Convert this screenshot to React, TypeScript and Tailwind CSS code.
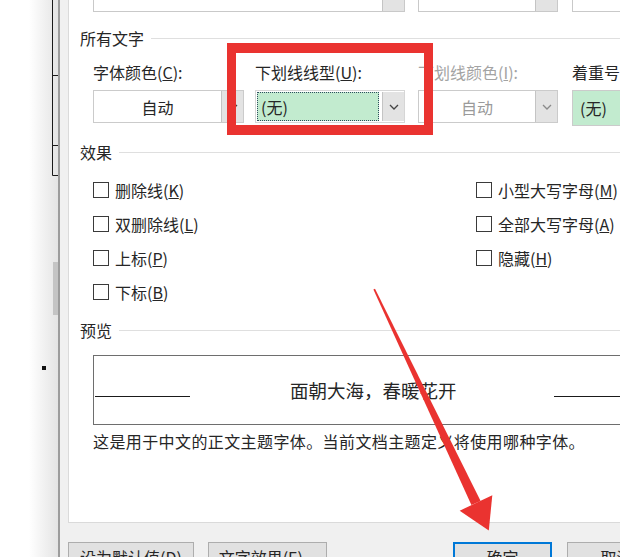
import React from "react";

const Chevron = ({ color = "#555" }: { color?: string }) => (
  <svg width="10" height="6" viewBox="0 0 10 6">
    <path d="M1 1l4 4 4-4" fill="none" stroke={color} strokeWidth="1.3" />
  </svg>
);

function SectionHeader({ title }: { title: string }) {
  return (
    <div className="flex items-center h-[20px]">
      <span className="text-[16px] leading-[20px] text-[#262626]">{title}</span>
      <div className="flex-1 h-px bg-[#dfdfdf] ml-[7px]" />
    </div>
  );
}

function DropBtn({ disabled = false }: { disabled?: boolean }) {
  return (
    <div className="w-[22px] h-full shrink-0 bg-[#e3e3e3] border-l border-[#c4c4c4] flex items-center justify-center">
      <Chevron color={disabled ? "#8a8a8a" : "#444"} />
    </div>
  );
}

function Check({ label, k }: { label: string; k: string }) {
  return (
    <div className="flex items-center h-[34px]">
      <div className="w-[16px] h-[16px] border border-[#3a3a3a] bg-white shrink-0" />
      <span className="ml-[6px] text-[16px] leading-[20px] text-[#262626] whitespace-nowrap">
        {label}(<span className="underline">{k}</span>)
      </span>
    </div>
  );
}

export default function App() {
  return (
    <div className="relative w-[620px] h-[557px] overflow-hidden bg-white flex font-['Noto_Sans_CJK_SC',sans-serif]">
      {/* document area */}
      <div className="w-[58px] h-full shrink-0 bg-gradient-to-r from-white via-white to-[#e4e4e4]">
        <svg width="58" height="557" viewBox="0 0 58 557">
          <path d="M52.5 0V175.5H58M52.5 75.5H58M52.5 145.5H58" fill="none" stroke="#1a1a1a" strokeWidth="1" />
          <rect x="53" y="262" width="5" height="53" fill="#c4c4c4" />
          <rect x="42" y="366" width="4" height="4" fill="#111" />
        </svg>
      </div>

      {/* dialog */}
      <div className="w-[640px] shrink-0 flex flex-col bg-[#f0f0f0] border-l-2 border-[#9c9c9c] pl-[8px]">
        <div className="h-[523px] shrink-0 bg-white border-l border-b border-[#dadada] pl-[11px] flex flex-col">
          {/* previous row combos (cut) */}
          <div className="flex h-[12px] ml-[13px]">
            <div className="w-[312px] h-full border-x border-b border-[#c9c9c9] flex justify-end">
              <div className="w-[22px] h-full bg-[#e3e3e3] border-l border-[#c4c4c4]" />
            </div>
            <div className="w-[140px] ml-[13px] h-full border-x border-b border-[#c9c9c9] flex justify-end">
              <div className="w-[22px] h-full bg-[#e3e3e3] border-l border-[#c4c4c4]" />
            </div>
            <div className="w-[100px] ml-[14px] h-full border-x border-b border-[#c9c9c9]" />
          </div>

          <div className="mt-[16px]">
            <SectionHeader title="所有文字" />
          </div>

          {/* labels */}
          <div className="flex mt-[14px] ml-[13px] text-[16px] leading-[20px] text-[#262626] whitespace-nowrap">
            <div className="w-[162px]">字体颜色(<span className="underline">C</span>):</div>
            <div className="w-[163px]">下划线线型(<span className="underline">U</span>):</div>
            <div className="w-[154px] text-[#a3a3a3]">下划线颜色(<span className="underline">I</span>):</div>
            <div className="w-[100px]">着重号(·):</div>
          </div>

          {/* combos */}
          <div className="flex mt-[8px] ml-[13px] h-[33px]">
            <div className="w-[151px] h-full border border-[#cbcbcb] bg-white flex">
              <div className="flex-1 flex items-center justify-center text-[16px] text-[#262626]">自动</div>
              <DropBtn />
            </div>
            <div className="w-[150px] ml-[11px] h-full border border-[#d6d6d6] bg-white flex items-stretch py-[1px] pl-[1px]">
              <div className="flex-1 bg-[#c2ebcf] border border-dotted border-[#2f4f5f] flex items-center pl-[3px] text-[16px] text-[#262626]">
                (无)
              </div>
              <div className="ml-[3px] w-[22px] shrink-0 bg-[#e3e3e3] border-l border-[#c4c4c4] flex items-center justify-center">
                <Chevron color="#444" />
              </div>
            </div>
            <div className="w-[140px] ml-[13px] h-full border border-[#cbcbcb] bg-white flex">
              <div className="flex-1 flex items-center justify-center text-[16px] text-[#9a9a9a]">自动</div>
              <DropBtn disabled />
            </div>
            <div className="w-[100px] ml-[14px] h-[36px] border border-[#cbcbcb] bg-[#c2ebcf] flex items-center pl-[7px] text-[16px] text-[#262626]">
              (无)
            </div>
          </div>

          <div className="mt-[19px]">
            <SectionHeader title="效果" />
          </div>

          {/* checkboxes */}
          <div className="mt-[11px] ml-[13px] flex">
            <div className="w-[383px] flex flex-col">
              <Check label="删除线" k="K" />
              <Check label="双删除线" k="L" />
              <Check label="上标" k="P" />
              <Check label="下标" k="B" />
            </div>
            <div className="flex flex-col">
              <Check label="小型大写字母" k="M" />
              <Check label="全部大写字母" k="A" />
              <Check label="隐藏" k="H" />
            </div>
          </div>

          <div className="mt-[11px]">
            <SectionHeader title="预览" />
          </div>

          {/* preview */}
          <div className="mt-[15px] ml-[13px] w-[560px] h-[70px] border border-[#6e6e6e] bg-white flex items-center">
            <div className="ml-[1px] w-[95px] h-px bg-[#1a1a1a] mt-[12px] shrink-0" />
            <div className="ml-[100px] text-[18.5px] leading-[24px] text-[#262626] whitespace-nowrap">面朝大海，春暖花开</div>
            <div className="ml-[97px] w-[120px] h-px bg-[#1a1a1a] mt-[12px] shrink-0" />
          </div>

          <div className="mt-[6px] ml-[13px] text-[16px] leading-[20px] tracking-[0.4px] text-[#262626] whitespace-nowrap">
            这是用于中文的正文主题字体。当前文档主题定义将使用哪种字体。
          </div>
        </div>

        {/* buttons */}
        <div className="flex mt-[19px] text-[16px] text-[#262626]">
          <div className="w-[126px] h-[30px] bg-[#e1e1e1] border border-[#adadad] flex items-center justify-center whitespace-nowrap">设为默认值(<span className="underline">D</span>)</div>
          <div className="w-[119px] ml-[14px] h-[30px] bg-[#e1e1e1] border border-[#adadad] flex items-center justify-center whitespace-nowrap">文字效果(<span className="underline">E</span>)...</div>
          <div className="w-[99px] ml-[126px] h-[30px] bg-[#e1e1e1] border-2 border-[#0078d7] flex items-center justify-center">确定</div>
          <div className="w-[99px] ml-[15px] h-[30px] bg-[#e1e1e1] border border-[#adadad] flex items-center justify-center">取消</div>
        </div>
      </div>

      {/* red highlight box */}
      <div className="absolute left-[227px] top-[43px] w-[206px] h-[92px] border-x-[9px] border-y-[10px] border-[#ea3330]" />

      {/* red arrow */}
      <svg className="absolute left-0 top-0 pointer-events-none" width="620" height="557" viewBox="0 0 620 557">
        <polygon points="373.4,289.6 375,288.8 480.6,501 471.4,505" fill="#ea3330" />
        <polygon points="459.7,510.7 492.3,495.3 488.8,530.5" fill="#ea3330" />
      </svg>
    </div>
  );
}
